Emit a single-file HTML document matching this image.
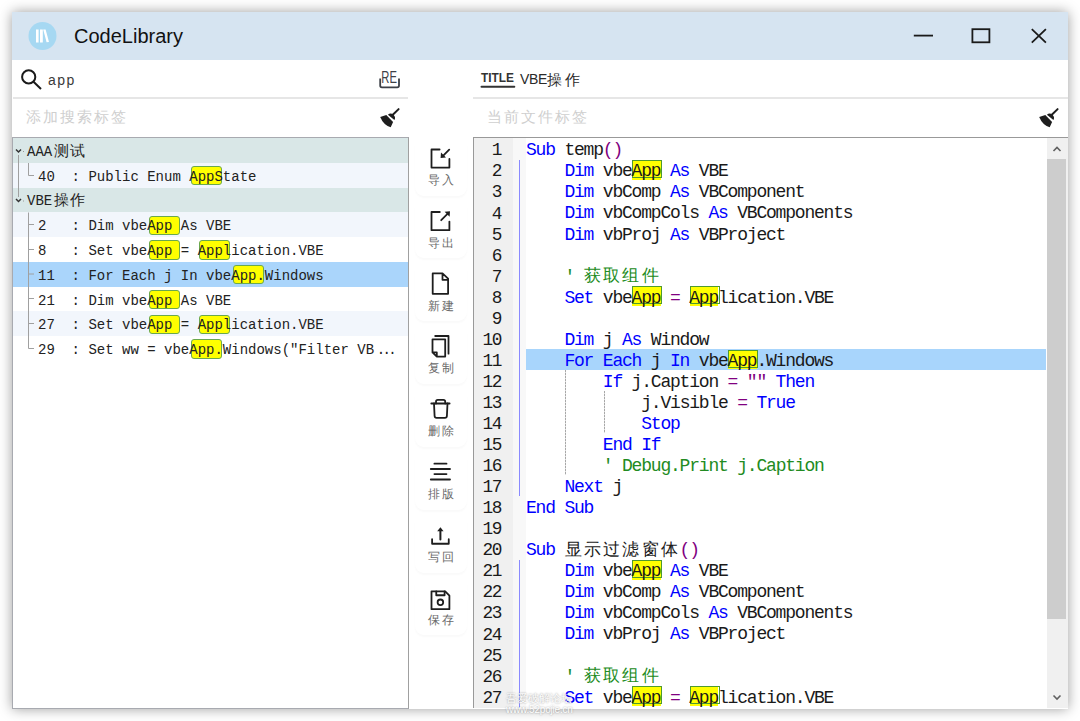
<!DOCTYPE html>
<html><head><meta charset="utf-8"><style>
*{box-sizing:border-box;margin:0;padding:0}
html,body{width:1080px;height:721px;background:#fff;overflow:hidden;font-family:"Liberation Sans",sans-serif}
div{position:absolute}
.win{left:12px;top:12px;width:1056px;height:697px;background:#fff;box-shadow:0 0 12px rgba(0,0,0,.39)}
.title{left:12px;top:12px;width:1056px;height:48px;background:#d6e4f1}
.ttl{left:74px;top:22.5px;font-size:20px;color:#111;line-height:26px;white-space:pre}
.sep{height:2px;background:#e6e6e6}
.ph{color:#cfcfcf;font-size:15px;letter-spacing:2px;line-height:20px;white-space:pre}
.tree{left:12px;top:137px;width:397px;height:572px;border:1px solid #a8aab0;border-right-color:#a0a0a0;background:#fff}
.row{left:13px;width:395px;height:24.75px}
.row.g{background:#d9e7e7}
.row.light{background:#f2f6fc}
.row.sel{background:#aad5fb}
.tt{font-family:"Liberation Mono",monospace;font-size:14px;line-height:24.7px;height:24.7px;color:#222;white-space:pre;padding-top:2.2px}
.gt{left:27px;font-family:"Liberation Mono",monospace;font-size:14px;line-height:24.7px;height:24.7px;color:#222;white-space:pre;padding-top:1.5px}
.gz{font-size:15px;letter-spacing:1px;position:relative;left:1.5px}
.tbx{width:31px;height:19.4px;background:#ffff00;border:1px solid #6aa84f;border-radius:3px}
.ed{left:473px;top:137px;width:595px;height:571px;border-left:1px solid #999;border-top:1px solid #999;background:#fff}
.gut{left:474px;top:138px;width:39px;height:570px;background:#f0f0f0}
.fold{left:513px;top:138px;width:13px;height:570px;background:#f8f8f8}
.hl{left:526px;top:349.1px;width:520px;height:20.8px;background:#a8d5fc}
.cd{font-family:"Liberation Mono",monospace;font-size:18px;letter-spacing:-1.2px;line-height:24px;height:21px;white-space:pre;top:0;margin-top:-0.3px}
.cz{font-size:17px;letter-spacing:2.2px;line-height:21px;height:21px;white-space:pre;margin-top:0.5px;padding-left:0.5px}
.chy{width:28.5px;height:19.5px;background:#ffff00;margin-top:-0.5px}
.chb{width:30px;height:18px;border:1px solid #4f9a2f;margin-top:-0.5px}
.num{left:474px;width:27px;text-align:right;font-family:"Liberation Mono",monospace;font-size:18.5px;letter-spacing:-1.5px;line-height:24px;height:21px;color:#1a1a1a;margin-top:0.8px;transform:scaleX(0.96);transform-origin:100% 50%}
.sb{left:1047px;top:138px;width:21px;height:570px;background:#f0f0f0}
.thumb{left:1047px;top:159px;width:19px;height:460px;background:#cdcdcd}
.tb{left:415px;width:52px;height:58px;border-radius:9px;box-shadow:0 2px 2px rgba(0,0,0,.025)}
.tbl{left:415px;width:52px;text-align:center;font-size:12px;color:#6a6a6a;letter-spacing:2px;text-indent:2px;line-height:14px;white-space:pre}
.guide{width:1px;background:#8a8aff}
.dg{width:1px;background:repeating-linear-gradient(#a8a8a8 0 2px,#e0e0e0 2px 3px)}
svg{position:absolute}
</style></head><body>
<div class="win"></div>
<div class="title"></div>
<svg style="left:28px;top:22px" width="29" height="29" viewBox="0 0 29 29">
 <circle cx="14.5" cy="14" r="14" fill="#a6d8f2"/>
 <rect x="8" y="7.5" width="2.6" height="13" fill="#fff"/>
 <rect x="12" y="7.5" width="2.8" height="13" fill="#fff"/>
 <path d="M15.2 7.5 L17.6 7.5 L21 20 L18.6 20.3 Z" fill="#fff"/>
</svg>
<div class="ttl">CodeLibrary</div>
<svg style="left:908px;top:24px" width="160" height="24" viewBox="0 0 160 24">
 <path d="M5.8 11.6 H25" stroke="#1a1a1a" stroke-width="1.8"/>
 <rect x="64.4" y="5.2" width="17" height="13.1" fill="none" stroke="#1a1a1a" stroke-width="1.8"/>
 <path d="M123.8 5.2 L137.9 18.6 M137.9 5.2 L123.8 18.6" stroke="#1a1a1a" stroke-width="1.8"/>
</svg>

<svg style="left:18px;top:65px" width="26" height="26" viewBox="0 0 26 26">
 <circle cx="10.7" cy="11.9" r="6.6" fill="none" stroke="#1a1a1a" stroke-width="2"/>
 <path d="M15.5 16.8 L23 24" stroke="#1a1a1a" stroke-width="2"/>
</svg>
<div style="left:48px;top:70px;font-size:14px;color:#3a3a3a;letter-spacing:1.5px;line-height:20px">app</div>
<svg style="left:377px;top:69px" width="26" height="22" viewBox="0 0 26 22">
 <text x="4.3" y="13.7" font-family="Liberation Sans" font-size="16.5" fill="#3c4048" textLength="15.6" lengthAdjust="spacingAndGlyphs">RE</text>
 <path d="M3.2 9.5 V16.5 Q3.2 18.4 5 18.4 H20.2 Q22 18.4 22 16.5 V9.5" fill="none" stroke="#3c4048" stroke-width="1.8"/>
</svg>
<div class="sep" style="left:13px;top:97px;width:395px"></div>
<div class="ph" style="left:26px;top:107px">添加搜索标签</div>
<svg style="left:379px;top:106px" width="24" height="24" viewBox="0 0 24 24"><path d="M19.6 3.1 L13.8 8.8" stroke="#1e1e1e" stroke-width="2" stroke-linecap="round"/>
  <path d="M8.9 8.7 A4.3 4.3 0 0 1 15.4 14.1 Z" fill="#1e1e1e"/>
  <path d="M1.2 11 L7.3 8.9 L14.1 15.9 L11.7 21.3 Q4.6 19.2 1.2 11 Z" fill="#1e1e1e"/></svg>

<div class="tree"></div>
<div class="tt" style="left:376.7px;top:336px;letter-spacing:-2.6px">...</div>
<div class="row g" style="top:138.0px"></div>
<div class="row light" style="top:162.8px"></div>
<div class="row g" style="top:187.5px"></div>
<div class="row light" style="top:212.2px"></div>
<div class="row white" style="top:237.0px"></div>
<div class="row sel" style="top:261.8px"></div>
<div class="row white" style="top:286.5px"></div>
<div class="row light" style="top:311.2px"></div>
<div class="row white" style="top:336.0px"></div>
<div class="tbx" style="left:190.8px;top:166.1px"></div>
<div class="tbx" style="left:148.8px;top:215.6px"></div>
<div class="tbx" style="left:148.8px;top:240.3px"></div>
<div class="tbx" style="left:199.2px;top:240.3px"></div>
<div class="tbx" style="left:232.8px;top:265.1px"></div>
<div class="tbx" style="left:148.8px;top:289.8px"></div>
<div class="tbx" style="left:148.8px;top:314.6px"></div>
<div class="tbx" style="left:199.2px;top:314.6px"></div>
<div class="tbx" style="left:190.8px;top:339.3px"></div>
<div class="gt" style="top:138.0px">AAA<span class="gz">测试</span></div>
<div class="tt" style="left:38.0px;top:162.8px">40  : Public Enum AppState</div>
<div class="gt" style="top:187.5px">VBE<span class="gz">操作</span></div>
<div class="tt" style="left:38.0px;top:212.2px">2   : Dim vbeApp As VBE</div>
<div class="tt" style="left:38.0px;top:237.0px">8   : Set vbeApp = Application.VBE</div>
<div class="tt" style="left:38.0px;top:261.8px">11  : For Each j In vbeApp.Windows</div>
<div class="tt" style="left:38.0px;top:286.5px">21  : Dim vbeApp As VBE</div>
<div class="tt" style="left:38.0px;top:311.2px">27  : Set vbeApp = Application.VBE</div>
<div class="tt" style="left:38.0px;top:336.0px">29  : Set ww = vbeApp.Windows(&quot;Filter VB</div>

<div class="tb" style="top:137.50px"></div><div class="tbl" style="top:172.90px">导入</div>
<div class="tb" style="top:200.35px"></div><div class="tbl" style="top:235.75px">导出</div>
<div class="tb" style="top:263.20px"></div><div class="tbl" style="top:298.60px">新建</div>
<div class="tb" style="top:326.05px"></div><div class="tbl" style="top:361.45px">复制</div>
<div class="tb" style="top:388.90px"></div><div class="tbl" style="top:424.30px">删除</div>
<div class="tb" style="top:451.75px"></div><div class="tbl" style="top:487.15px">排版</div>
<div class="tb" style="top:514.60px"></div><div class="tbl" style="top:550.00px">写回</div>
<div class="tb" style="top:577.45px"></div><div class="tbl" style="top:612.85px">保存</div>

<svg style="left:480px;top:70px" width="36" height="20" viewBox="0 0 36 20">
 <text x="1" y="12.3" font-family="Liberation Sans" font-size="12" font-weight="bold" fill="#333" textLength="33" lengthAdjust="spacingAndGlyphs">TITLE</text>
 <path d="M1.5 16.7 H34.3" stroke="#333" stroke-width="2" stroke-linecap="round"/>
</svg>
<div style="left:520px;top:69px;font-size:14px;color:#2a2a2a;letter-spacing:-0.4px;line-height:20px;white-space:pre">VBE<span style="font-size:14.5px;letter-spacing:3.4px;position:relative;left:0px;top:0.5px">操作</span></div>
<div class="sep" style="left:473px;top:97px;width:595px"></div>
<div class="ph" style="left:487px;top:107px">当前文件标签</div>
<svg style="left:1038px;top:106px" width="24" height="24" viewBox="0 0 24 24"><path d="M19.6 3.1 L13.8 8.8" stroke="#1e1e1e" stroke-width="2" stroke-linecap="round"/>
  <path d="M8.9 8.7 A4.3 4.3 0 0 1 15.4 14.1 Z" fill="#1e1e1e"/>
  <path d="M1.2 11 L7.3 8.9 L14.1 15.9 L11.7 21.3 Q4.6 19.2 1.2 11 Z" fill="#1e1e1e"/></svg>

<div class="ed"></div>
<div class="gut"></div><div class="fold"></div>
<div class="hl"></div>
<div class="guide" style="left:519px;top:160px;height:336px"></div>
<div class="guide" style="left:519px;top:559.6px;height:148px"></div>
<div class="dg" style="left:565px;top:370.2px;height:105.2px"></div>
<div class="dg" style="left:604px;top:391.2px;height:42.1px"></div>
<div class="num" style="top:138.60px">1</div>
<div class="num" style="top:159.65px">2</div>
<div class="num" style="top:180.70px">3</div>
<div class="num" style="top:201.75px">4</div>
<div class="num" style="top:222.80px">5</div>
<div class="num" style="top:243.85px">6</div>
<div class="num" style="top:264.90px">7</div>
<div class="num" style="top:285.95px">8</div>
<div class="num" style="top:307.00px">9</div>
<div class="num" style="top:328.05px">10</div>
<div class="num" style="top:349.10px">11</div>
<div class="num" style="top:370.15px">12</div>
<div class="num" style="top:391.20px">13</div>
<div class="num" style="top:412.25px">14</div>
<div class="num" style="top:433.30px">15</div>
<div class="num" style="top:454.35px">16</div>
<div class="num" style="top:475.40px">17</div>
<div class="num" style="top:496.45px">18</div>
<div class="num" style="top:517.50px">19</div>
<div class="num" style="top:538.55px">20</div>
<div class="num" style="top:559.60px">21</div>
<div class="num" style="top:580.65px">22</div>
<div class="num" style="top:601.70px">23</div>
<div class="num" style="top:622.75px">24</div>
<div class="num" style="top:643.80px">25</div>
<div class="num" style="top:664.85px">26</div>
<div class="num" style="top:685.90px">27</div>
<div class="chy" style="left:632.1px;top:160.65px"></div><div class="chb" style="left:632.1px;top:160.65px"></div>
<div class="chy" style="left:632.1px;top:286.95px"></div><div class="chb" style="left:632.1px;top:286.95px"></div>
<div class="chy" style="left:689.7px;top:286.95px"></div><div class="chb" style="left:689.7px;top:286.95px"></div>
<div class="chy" style="left:728.1px;top:350.10px"></div><div class="chb" style="left:728.1px;top:350.10px"></div>
<div class="chy" style="left:632.1px;top:560.60px"></div><div class="chb" style="left:632.1px;top:560.60px"></div>
<div class="chy" style="left:632.1px;top:686.90px"></div><div class="chb" style="left:632.1px;top:686.90px"></div>
<div class="chy" style="left:689.7px;top:686.90px"></div><div class="chb" style="left:689.7px;top:686.90px"></div>
<div class="cd" style="left:526.0px;top:138.60px;color:#0000ff">Sub</div>
<div class="cd" style="left:554.8px;top:138.60px;color:#1a1a1a"> temp</div>
<div class="cd" style="left:602.8px;top:138.60px;color:#800080">()</div>
<div class="cd" style="left:526.0px;top:159.65px;color:#1a1a1a">    </div>
<div class="cd" style="left:564.4px;top:159.65px;color:#0000ff">Dim</div>
<div class="cd" style="left:593.2px;top:159.65px;color:#1a1a1a"> vbe</div>
<div class="cd" style="left:631.6px;top:159.65px;color:#1a1a1a">App</div>
<div class="cd" style="left:660.4px;top:159.65px;color:#1a1a1a"> </div>
<div class="cd" style="left:670.0px;top:159.65px;color:#0000ff">As</div>
<div class="cd" style="left:689.2px;top:159.65px;color:#1a1a1a"> VBE</div>
<div class="cd" style="left:526.0px;top:180.70px;color:#1a1a1a">    </div>
<div class="cd" style="left:564.4px;top:180.70px;color:#0000ff">Dim</div>
<div class="cd" style="left:593.2px;top:180.70px;color:#1a1a1a"> vbComp </div>
<div class="cd" style="left:670.0px;top:180.70px;color:#0000ff">As</div>
<div class="cd" style="left:689.2px;top:180.70px;color:#1a1a1a"> VBComponent</div>
<div class="cd" style="left:526.0px;top:201.75px;color:#1a1a1a">    </div>
<div class="cd" style="left:564.4px;top:201.75px;color:#0000ff">Dim</div>
<div class="cd" style="left:593.2px;top:201.75px;color:#1a1a1a"> vbCompCols </div>
<div class="cd" style="left:708.4px;top:201.75px;color:#0000ff">As</div>
<div class="cd" style="left:727.6px;top:201.75px;color:#1a1a1a"> VBComponents</div>
<div class="cd" style="left:526.0px;top:222.80px;color:#1a1a1a">    </div>
<div class="cd" style="left:564.4px;top:222.80px;color:#0000ff">Dim</div>
<div class="cd" style="left:593.2px;top:222.80px;color:#1a1a1a"> vbProj </div>
<div class="cd" style="left:670.0px;top:222.80px;color:#0000ff">As</div>
<div class="cd" style="left:689.2px;top:222.80px;color:#1a1a1a"> VBProject</div>
<div class="cd" style="left:526.0px;top:264.90px;color:#1a1a1a">    </div>
<div class="cd" style="left:564.4px;top:264.90px;color:#228b22">&#x27; </div>
<div class="cz" style="left:583.6px;top:264.90px;color:#228b22">获取组件</div>
<div class="cd" style="left:526.0px;top:285.95px;color:#1a1a1a">    </div>
<div class="cd" style="left:564.4px;top:285.95px;color:#0000ff">Set</div>
<div class="cd" style="left:593.2px;top:285.95px;color:#1a1a1a"> vbe</div>
<div class="cd" style="left:631.6px;top:285.95px;color:#1a1a1a">App</div>
<div class="cd" style="left:660.4px;top:285.95px;color:#1a1a1a"> </div>
<div class="cd" style="left:670.0px;top:285.95px;color:#800080">=</div>
<div class="cd" style="left:679.6px;top:285.95px;color:#1a1a1a"> </div>
<div class="cd" style="left:689.2px;top:285.95px;color:#1a1a1a">App</div>
<div class="cd" style="left:718.0px;top:285.95px;color:#1a1a1a">lication.VBE</div>
<div class="cd" style="left:526.0px;top:328.05px;color:#1a1a1a">    </div>
<div class="cd" style="left:564.4px;top:328.05px;color:#0000ff">Dim</div>
<div class="cd" style="left:593.2px;top:328.05px;color:#1a1a1a"> j </div>
<div class="cd" style="left:622.0px;top:328.05px;color:#0000ff">As</div>
<div class="cd" style="left:641.2px;top:328.05px;color:#1a1a1a"> Window</div>
<div class="cd" style="left:526.0px;top:349.10px;color:#1a1a1a">    </div>
<div class="cd" style="left:564.4px;top:349.10px;color:#0000ff">For</div>
<div class="cd" style="left:593.2px;top:349.10px;color:#1a1a1a"> </div>
<div class="cd" style="left:602.8px;top:349.10px;color:#0000ff">Each</div>
<div class="cd" style="left:641.2px;top:349.10px;color:#1a1a1a"> j </div>
<div class="cd" style="left:670.0px;top:349.10px;color:#0000ff">In</div>
<div class="cd" style="left:689.2px;top:349.10px;color:#1a1a1a"> vbe</div>
<div class="cd" style="left:727.6px;top:349.10px;color:#1a1a1a">App</div>
<div class="cd" style="left:756.4px;top:349.10px;color:#1a1a1a">.Windows</div>
<div class="cd" style="left:526.0px;top:370.15px;color:#1a1a1a">        </div>
<div class="cd" style="left:602.8px;top:370.15px;color:#0000ff">If</div>
<div class="cd" style="left:622.0px;top:370.15px;color:#1a1a1a"> j.Caption </div>
<div class="cd" style="left:727.6px;top:370.15px;color:#800080">=</div>
<div class="cd" style="left:737.2px;top:370.15px;color:#1a1a1a"> </div>
<div class="cd" style="left:746.8px;top:370.15px;color:#800080">&quot;&quot;</div>
<div class="cd" style="left:766.0px;top:370.15px;color:#1a1a1a"> </div>
<div class="cd" style="left:775.6px;top:370.15px;color:#0000ff">Then</div>
<div class="cd" style="left:526.0px;top:391.20px;color:#1a1a1a">            j.Visible </div>
<div class="cd" style="left:737.2px;top:391.20px;color:#800080">=</div>
<div class="cd" style="left:746.8px;top:391.20px;color:#1a1a1a"> </div>
<div class="cd" style="left:756.4px;top:391.20px;color:#0000ff">True</div>
<div class="cd" style="left:526.0px;top:412.25px;color:#1a1a1a">            </div>
<div class="cd" style="left:641.2px;top:412.25px;color:#0000ff">Stop</div>
<div class="cd" style="left:526.0px;top:433.30px;color:#1a1a1a">        </div>
<div class="cd" style="left:602.8px;top:433.30px;color:#0000ff">End</div>
<div class="cd" style="left:631.6px;top:433.30px;color:#1a1a1a"> </div>
<div class="cd" style="left:641.2px;top:433.30px;color:#0000ff">If</div>
<div class="cd" style="left:526.0px;top:454.35px;color:#1a1a1a">        </div>
<div class="cd" style="left:602.8px;top:454.35px;color:#228b22">&#x27; Debug.Print j.Caption</div>
<div class="cd" style="left:526.0px;top:475.40px;color:#1a1a1a">    </div>
<div class="cd" style="left:564.4px;top:475.40px;color:#0000ff">Next</div>
<div class="cd" style="left:602.8px;top:475.40px;color:#1a1a1a"> j</div>
<div class="cd" style="left:526.0px;top:496.45px;color:#0000ff">End</div>
<div class="cd" style="left:554.8px;top:496.45px;color:#1a1a1a"> </div>
<div class="cd" style="left:564.4px;top:496.45px;color:#0000ff">Sub</div>
<div class="cd" style="left:526.0px;top:538.55px;color:#0000ff">Sub</div>
<div class="cd" style="left:554.8px;top:538.55px;color:#1a1a1a"> </div>
<div class="cz" style="left:564.4px;top:538.55px;color:#1a1a1a">显示过滤窗体</div>
<div class="cd" style="left:679.6px;top:538.55px;color:#800080">()</div>
<div class="cd" style="left:526.0px;top:559.60px;color:#1a1a1a">    </div>
<div class="cd" style="left:564.4px;top:559.60px;color:#0000ff">Dim</div>
<div class="cd" style="left:593.2px;top:559.60px;color:#1a1a1a"> vbe</div>
<div class="cd" style="left:631.6px;top:559.60px;color:#1a1a1a">App</div>
<div class="cd" style="left:660.4px;top:559.60px;color:#1a1a1a"> </div>
<div class="cd" style="left:670.0px;top:559.60px;color:#0000ff">As</div>
<div class="cd" style="left:689.2px;top:559.60px;color:#1a1a1a"> VBE</div>
<div class="cd" style="left:526.0px;top:580.65px;color:#1a1a1a">    </div>
<div class="cd" style="left:564.4px;top:580.65px;color:#0000ff">Dim</div>
<div class="cd" style="left:593.2px;top:580.65px;color:#1a1a1a"> vbComp </div>
<div class="cd" style="left:670.0px;top:580.65px;color:#0000ff">As</div>
<div class="cd" style="left:689.2px;top:580.65px;color:#1a1a1a"> VBComponent</div>
<div class="cd" style="left:526.0px;top:601.70px;color:#1a1a1a">    </div>
<div class="cd" style="left:564.4px;top:601.70px;color:#0000ff">Dim</div>
<div class="cd" style="left:593.2px;top:601.70px;color:#1a1a1a"> vbCompCols </div>
<div class="cd" style="left:708.4px;top:601.70px;color:#0000ff">As</div>
<div class="cd" style="left:727.6px;top:601.70px;color:#1a1a1a"> VBComponents</div>
<div class="cd" style="left:526.0px;top:622.75px;color:#1a1a1a">    </div>
<div class="cd" style="left:564.4px;top:622.75px;color:#0000ff">Dim</div>
<div class="cd" style="left:593.2px;top:622.75px;color:#1a1a1a"> vbProj </div>
<div class="cd" style="left:670.0px;top:622.75px;color:#0000ff">As</div>
<div class="cd" style="left:689.2px;top:622.75px;color:#1a1a1a"> VBProject</div>
<div class="cd" style="left:526.0px;top:664.85px;color:#1a1a1a">    </div>
<div class="cd" style="left:564.4px;top:664.85px;color:#228b22">&#x27; </div>
<div class="cz" style="left:583.6px;top:664.85px;color:#228b22">获取组件</div>
<div class="cd" style="left:526.0px;top:685.90px;color:#1a1a1a">    </div>
<div class="cd" style="left:564.4px;top:685.90px;color:#0000ff">Set</div>
<div class="cd" style="left:593.2px;top:685.90px;color:#1a1a1a"> vbe</div>
<div class="cd" style="left:631.6px;top:685.90px;color:#1a1a1a">App</div>
<div class="cd" style="left:660.4px;top:685.90px;color:#1a1a1a"> </div>
<div class="cd" style="left:670.0px;top:685.90px;color:#800080">=</div>
<div class="cd" style="left:679.6px;top:685.90px;color:#1a1a1a"> </div>
<div class="cd" style="left:689.2px;top:685.90px;color:#1a1a1a">App</div>
<div class="cd" style="left:718.0px;top:685.90px;color:#1a1a1a">lication.VBE</div>
<div class="sb"></div>
<div class="thumb"></div>
<svg style="left:1047px;top:138px" width="21" height="21" viewBox="0 0 21 21"><path d="M6.5 13 L10 9.5 L13.5 13" fill="none" stroke="#606060" stroke-width="1.6"/></svg>
<svg style="left:1047px;top:687px" width="21" height="21" viewBox="0 0 21 21"><path d="M6.5 8.5 L10 12 L13.5 8.5" fill="none" stroke="#606060" stroke-width="1.6"/></svg>

<svg style="left:0;top:0;z-index:5" width="1080" height="721" viewBox="0 0 1080 721">
 <g fill="none" stroke="#1e1e1e" stroke-width="1.8" stroke-linejoin="round" stroke-linecap="round">
  <path d="M439.6 149.5 H431.5 V167.6 H449.4 V159"/>
  <path d="M449.2 149.7 L443 155.9"/>
  <path d="M439.8 212 H431.5 V230.2 H449.4 V221.6"/>
  <path d="M441.2 220.2 L447.5 213.9"/>
  <path d="M442.5 273.4 H432.7 V293.8 H448.1 V278.6 Z M442.5 273.4 V279.8 H448.1"/>
  <path d="M435.2 336 H448.5 V353.7"/>
  <path d="M432.5 339.3 H445.2 V356.6 H436.8 L432.5 352.4 Z M432.5 352.4 H436.8 V356.6"/>
  <path d="M431.3 403.5 H449.6"/>
  <path d="M436 403.5 V401.6 Q436 399.8 437.8 399.8 H443.4 Q445.2 399.8 445.2 401.6 V403.5"/>
  <path d="M434 403.5 L434.6 416 Q434.7 417.9 436.6 417.9 H444.9 Q446.8 417.9 446.9 416 L447.5 403.5"/>
  <path d="M434.4 463.7 H446.5 M430.8 469 H450 M434.4 474.1 H446.5 M430.8 479.5 H450"/>
  <path d="M432.1 539.2 V543.75 H448.75 V539.2"/>
  <path d="M440.4 539.4 V530" stroke-width="2"/>
  <path d="M445.2 591.3 H431.5 V609.2 H449.4 V595.7 Z"/>
  <path d="M436.25 591.3 V595.25 H444.6 V591.3"/>
  <circle cx="440.4" cy="602.3" r="2.8"/>
 </g>
 <g fill="#1e1e1e">
  <path d="M440.6 158 L441 152.6 L446 157.6 Z"/>
  <path d="M450 211.3 L449.6 216.7 L444.6 211.7 Z"/>
  <path d="M440.4 527.2 L443.6 531.2 L437.2 531.2 Z"/>
 </g>
 <g fill="none" stroke="#a0a0a0" stroke-width="1">
  <path d="M18.5 155 V197"/>
  <path d="M28.5 163 V175.5 H34"/>
  <path d="M28.5 212.5 V348.5 H34 M28.5 224.5 H34 M28.5 249.5 H34 M28.5 274 H34 M28.5 298.5 H34 M28.5 323.5 H34"/>
 </g>
 <g fill="none" stroke="#333" stroke-width="1.5">
  <path d="M16 149.5 L18.5 152 L21 149.5"/>
  <path d="M16 199 L18.5 201.5 L21 199"/>
 </g>
 <g fill="#999"><rect x="23" y="151" width="1" height="1"/><rect x="23" y="200.5" width="1" height="1"/></g>
</svg>
<div style="left:506px;top:692px;font-size:11px;line-height:13px;color:#fff;text-shadow:0 0 2px rgba(0,0,0,.45);letter-spacing:0px;white-space:pre;z-index:6">吾爱破解论坛</div>
<div style="left:506px;top:704px;font-size:10px;letter-spacing:-0.2px;line-height:12px;color:#fff;text-shadow:0 0 2px rgba(0,0,0,.4);white-space:pre;z-index:6">www.52pojie.cn</div>
</body></html>
